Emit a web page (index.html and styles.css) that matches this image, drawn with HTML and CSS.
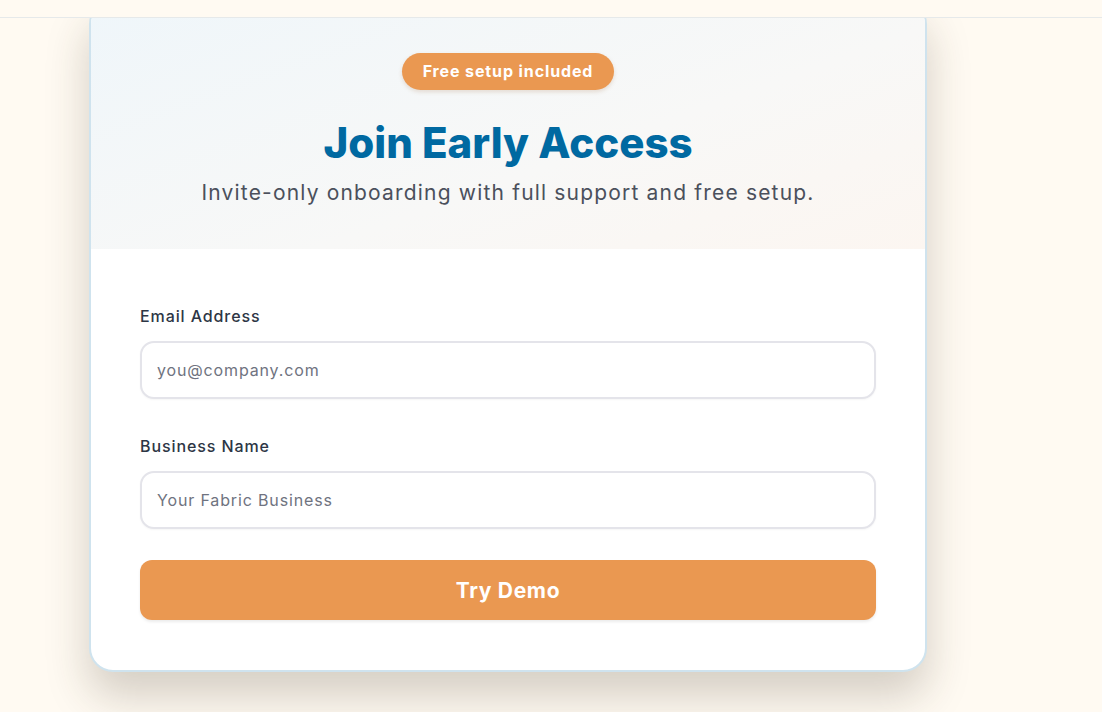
FILE: index.html
```html
<!DOCTYPE html>
<html lang="en">
<head>
<meta charset="utf-8">
<title>Join Early Access</title>
<link rel="stylesheet" href="styles.css">
</head>
<body>
<header class="topbar"></header>
<main class="page">
  <section class="card">
    <div class="card-head">
      <span class="badge">Free setup included</span>
      <h1 class="title">Join Early Access</h1>
      <p class="subtitle">Invite-only onboarding with full support and free setup.</p>
    </div>
    <form class="card-form">
      <div class="field">
        <label class="label" for="email">Email Address</label>
        <input class="input" id="email" type="email" placeholder="you@company.com">
      </div>
      <div class="field">
        <label class="label" for="biz">Business Name</label>
        <input class="input" id="biz" type="text" placeholder="Your Fabric Business">
      </div>
      <button class="submit" type="button">Try Demo</button>
    </form>
  </section>
</main>
</body>
</html>
```

FILE: styles.css
```css
* { box-sizing: border-box; }
html, body { margin: 0; padding: 0; }
body {
  background: #fffaf2;
  font-family: "Inter", "Open Sans", sans-serif;
  height: 712px;
  overflow: hidden;
}
.topbar {
  position: fixed;
  top: 0; left: 0; right: 0;
  height: 18px;
  background: #fffaf2;
  border-bottom: 1px solid #e6e9ea;
  z-index: 10;
}
.page {
  padding-left: 89px;
}
.card {
  width: 838px;
  border: 2px solid #cfe3ee;
  border-radius: 24px;
  background: #ffffff;
  overflow: hidden;
  box-shadow: 0 24px 44px rgba(60, 50, 30, 0.22);
}
.card-head {
  background: linear-gradient(160deg, #eff6fa 0%, #f8f8f7 60%, #fcf6f1 100%);
  padding: 51px 20px 42px;
  display: flex;
  flex-direction: column;
  align-items: center;
}
.badge {
  display: inline-block;
  height: 37px;
  line-height: 37px;
  padding: 0 21px;
  border-radius: 19px;
  background: #ea9851;
  color: #ffffff;
  font-weight: 700;
  font-size: 16px;
  letter-spacing: 0.88px;
  box-shadow: 0 2px 4px rgba(150, 90, 40, 0.18);
}
.title {
  margin: 28px 0 0;
  font-size: 42px;
  line-height: 50px;
  font-weight: 800;
  color: #0069a1;
}
.subtitle {
  margin: 11px 0 0;
  font-size: 21px;
  line-height: 28px;
  color: #4b505c;
  letter-spacing: 1.18px;
}
.card-form {
  padding: 57px 49px 50px;
  display: flex;
  flex-direction: column;
}
.field {
  display: flex;
  flex-direction: column;
  margin-bottom: 37px;
}
.field:nth-child(2) { margin-bottom: 31px; }
.label {
  font-size: 16px;
  line-height: 20px;
  font-weight: 500;
  letter-spacing: 0.9px;
  color: #2d3645;
  margin-bottom: 15px;
}
.input {
  height: 58px;
  border: 2px solid #e4e4ea;
  border-radius: 14px;
  padding: 0 15px;
  font-family: inherit;
  font-size: 16px;
  letter-spacing: 0.85px;
  color: #2d3645;
  background: #fff;
  box-shadow: 0 1px 2px rgba(0,0,0,0.04);
  outline: none;
}
.input::placeholder { color: #6f7380; }
.submit {
  height: 60px;
  border: none;
  border-radius: 12px;
  background: #ea9851;
  color: #ffffff;
  font-family: inherit;
  font-size: 21px;
  font-weight: 700;
  letter-spacing: 0.7px;
  box-shadow: 0 2px 3px rgba(0,0,0,0.08);
  cursor: pointer;
}
```
